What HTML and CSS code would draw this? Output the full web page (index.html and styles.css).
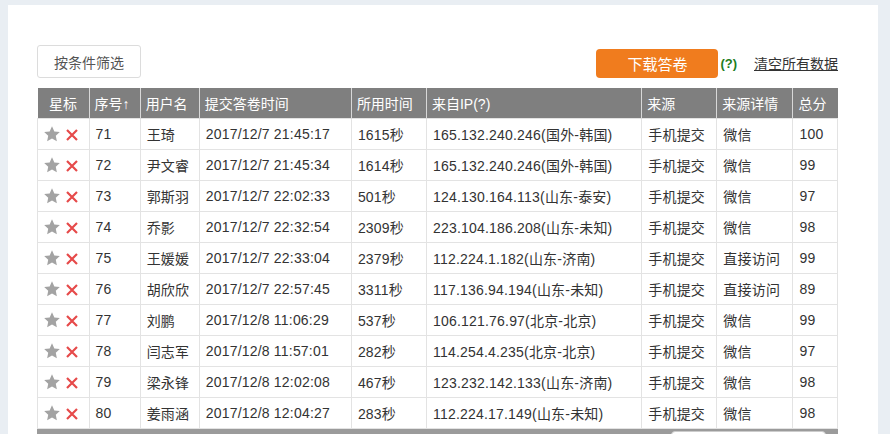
FILE: index.html
```html
<!DOCTYPE html>
<html lang="zh-CN">
<head>
  <meta charset="UTF-8" />
  <title>答卷数据</title>
  <link rel="stylesheet" href="styles.css">
</head>
<body>
  <div class="panel">
    <div class="toolbar">
      <button class="filter-btn">按条件筛选</button>
      <div class="actions">
        <button class="download-btn">下载答卷</button>
        <span class="help">(?)</span>
        <a class="clear-link" href="#">清空所有数据</a>
      </div>
    </div>

    <table class="answers">
      <thead>
        <tr>
          <th class="c-star">星标</th>
          <th class="c-no">序号↑</th>
          <th class="c-user">用户名</th>
          <th class="c-time">提交答卷时间</th>
          <th class="c-used">所用时间</th>
          <th class="c-ip">来自IP(?)</th>
          <th class="c-src">来源</th>
          <th class="c-detail">来源详情</th>
          <th class="c-score">总分</th>
        </tr>
      </thead>
      <tbody id="rows"></tbody>
    </table>

    <div class="pager">
      <div class="pager-box"></div>
    </div>
  </div>

  <script>
    const data = [
      [71, '王琦', '2017/12/7 21:45:17', '1615秒', '165.132.240.246(国外-韩国)', '手机提交', '微信', 100],
      [72, '尹文睿', '2017/12/7 21:45:34', '1614秒', '165.132.240.246(国外-韩国)', '手机提交', '微信', 99],
      [73, '郭斯羽', '2017/12/7 22:02:33', '501秒', '124.130.164.113(山东-泰安)', '手机提交', '微信', 97],
      [74, '乔影', '2017/12/7 22:32:54', '2309秒', '223.104.186.208(山东-未知)', '手机提交', '微信', 98],
      [75, '王媛媛', '2017/12/7 22:33:04', '2379秒', '112.224.1.182(山东-济南)', '手机提交', '直接访问', 99],
      [76, '胡欣欣', '2017/12/7 22:57:45', '3311秒', '117.136.94.194(山东-未知)', '手机提交', '直接访问', 89],
      [77, '刘鹏', '2017/12/8 11:06:29', '537秒', '106.121.76.97(北京-北京)', '手机提交', '微信', 99],
      [78, '闫志军', '2017/12/8 11:57:01', '282秒', '114.254.4.235(北京-北京)', '手机提交', '微信', 97],
      [79, '梁永锋', '2017/12/8 12:02:08', '467秒', '123.232.142.133(山东-济南)', '手机提交', '微信', 98],
      [80, '姜雨涵', '2017/12/8 12:04:27', '283秒', '112.224.17.149(山东-未知)', '手机提交', '微信', 98]
    ];

    const starSvg = '<svg class="star" viewBox="0 0 20 20" width="18" height="18"><path d="M10 1.5l2.6 5.6 6.1.7-4.5 4.2 1.2 6L10 15l-5.4 3 1.2-6L1.3 7.8l6.1-.7z"/></svg>';
    const delSvg = '<svg class="del" viewBox="0 0 14 14" width="14" height="14"><path d="M2 2l10 10M12 2L2 12"/></svg>';

    const tbody = document.getElementById('rows');
    data.forEach(r => {
      const tr = document.createElement('tr');
      tr.innerHTML = `
        <td class="c-star">${starSvg}${delSvg}</td>
        <td>${r[0]}</td>
        <td>${r[1]}</td>
        <td>${r[2]}</td>
        <td>${r[3]}</td>
        <td>${r[4]}</td>
        <td>${r[5]}</td>
        <td>${r[6]}</td>
        <td>${r[7]}</td>
      `;
      tbody.appendChild(tr);
    });
  </script>
</body>
</html>
```

FILE: styles.css
```css
body {
  margin: 0;
  background: #e9eef3;
  font-family: "Liberation Sans", "Noto Sans CJK SC", sans-serif;
  font-size: 14px;
  color: #333;
}

.panel {
  margin: 5px 0 0 8px;
  width: 870px;
  height: 429px;
  background: #fff;
  padding: 40px 0 0 29px;
  box-sizing: border-box;
  overflow: hidden;
}

.toolbar {
  width: 801px;
  display: flex;
  justify-content: space-between;
  align-items: center;
  margin-bottom: 10px;
}

.filter-btn {
  width: 104px;
  height: 33px;
  background: #fff;
  border: 1px solid #dcdcdc;
  border-radius: 3px;
  font-family: inherit;
  font-size: 14px;
  color: #555;
  padding: 0;
}

.actions {
  display: flex;
  align-items: center;
  padding-top: 3px;
}

.download-btn {
  width: 122px;
  height: 29px;
  background: #f07c1e;
  border: none;
  border-radius: 4px;
  color: #fff;
  font-family: inherit;
  font-size: 15px;
  padding: 0;
}

.help {
  color: #1d7d1d;
  font-weight: bold;
  font-size: 13px;
  margin-left: 2px;
}

.clear-link {
  color: #333;
  margin-left: 17px;
  font-size: 14px;
}

.answers {
  border-collapse: collapse;
  width: 801px;
  table-layout: fixed;
}

.answers th {
  background: #7f7f7f;
  color: #fff;
  font-weight: normal;
  text-align: left;
  height: 30px;
  padding: 0 5px;
  border-left: 1px solid #d8d8d8;
  white-space: nowrap;
  overflow: hidden;
}

.answers th:first-child {
  border-left: none;
  text-align: center;
}

.answers td {
  height: 30px;
  padding: 0 5px 0 6px;
  border: 1px solid #e3e3e3;
  white-space: nowrap;
  overflow: hidden;
  letter-spacing: 0.2px;
}

.c-star { width: 41px; }
.c-no { width: 40px; }
.c-user { width: 48px; }
.c-time { width: 141px; }
.c-used { width: 64px; }
.c-ip { width: 204px; }
.c-src { width: 64px; }
.c-detail { width: 65px; }
.c-score { width: 34px; }

td.c-star {
  padding-left: 5px;
}

.star {
  fill: #a3a3a3;
  vertical-align: -3px;
}

.del {
  stroke: #e64a4a;
  stroke-width: 2.2;
  fill: none;
  margin-left: 4px;
  vertical-align: -2px;
}

.pager {
  width: 801px;
  height: 20px;
  background: #9b9b9b;
  display: flex;
  justify-content: flex-end;
  padding: 2px 12px 0 0;
  box-sizing: border-box;
}

.pager-box {
  width: 153px;
  height: 20px;
  background: #fff;
  border: 1px solid #ccc;
  border-radius: 4px;
}
```
